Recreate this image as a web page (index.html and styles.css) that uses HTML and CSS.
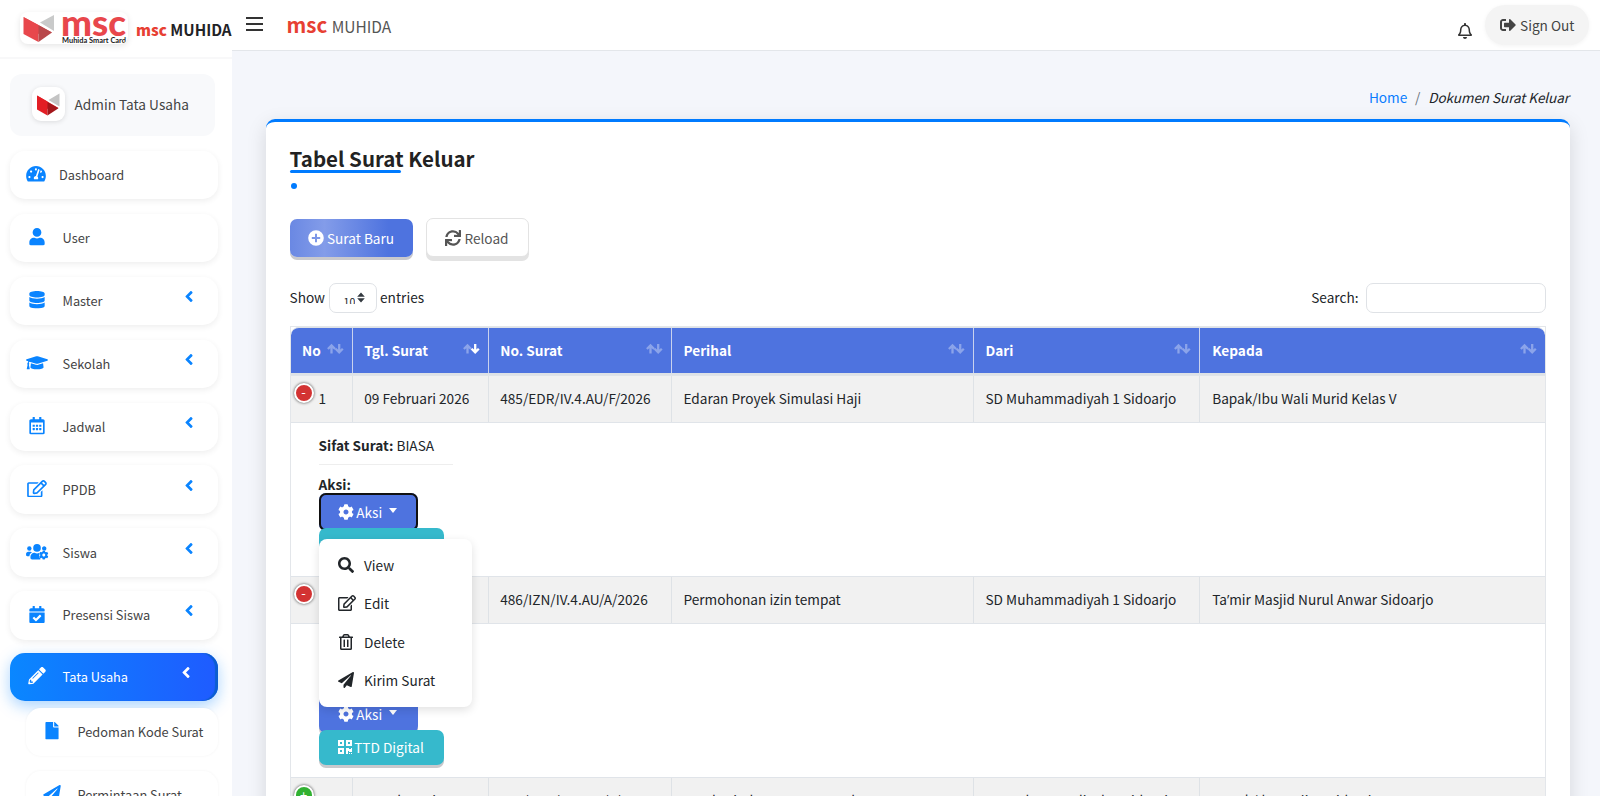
FILE: index.html
```html
<!DOCTYPE html>
<html lang="id">
<head>
<meta charset="utf-8">
<title>Dokumen Surat Keluar</title>
<link rel="stylesheet" href="styles.css">
</head>
<body>
<svg class="sprite" aria-hidden="true">
<symbol id="gauge" viewBox="0 0 576 512"><path d="M288 32C128.94 32 0 160.94 0 320c0 52.8 14.25 102.26 39.06 144.8 5.61 9.62 16.3 15.2 27.44 15.2h443c11.14 0 21.83-5.58 27.44-15.2C561.75 422.26 576 372.8 576 320c0-159.06-128.94-288-288-288zm0 64c14.71 0 26.58 10.13 30.32 23.65-1.11 2.26-2.64 4.23-3.45 6.67l-9.22 27.67c-5.13 3.49-10.97 6.01-17.64 6.01-17.67 0-32-14.33-32-32S270.33 96 288 96zM96 384c-17.67 0-32-14.33-32-32s14.33-32 32-32 32 14.33 32 32-14.33 32-32 32zm48-160c-17.67 0-32-14.33-32-32s14.33-32 32-32 32 14.33 32 32-14.33 32-32 32zm246.77-72.41l-61.33 184C343.13 347.33 352 364.54 352 384c0 11.72-3.38 22.55-8.88 32H232.88c-5.5-9.45-8.88-20.28-8.88-32 0-33.94 26.5-61.43 59.9-63.59l61.34-184.01c4.17-12.56 17.73-19.45 30.36-15.17 12.57 4.19 19.35 17.79 15.17 30.36zm14.66 57.2l15.52-46.55c3.47-1.29 7.13-2.23 11.05-2.23 17.67 0 32 14.33 32 32s-14.33 32-32 32c-11.38-.01-20.89-6.28-26.57-15.22zM480 384c-17.67 0-32-14.33-32-32s14.33-32 32-32 32 14.33 32 32-14.33 32-32 32z"/></symbol>
<symbol id="user" viewBox="0 0 448 512"><path d="M224 256c70.7 0 128-57.3 128-128S294.700 0 224 0 96 57.3 96 128s57.3 128 128 128zm89.6 32h-16.7c-22.2 10.2-46.9 16-72.9 16s-50.6-5.8-72.9-16h-16.7C60.2 288 0 348.2 0 422.4V464c0 26.5 21.5 48 48 48h352c26.5 0 48-21.5 48-48v-41.6c0-74.2-60.2-134.4-134.4-134.4z"/></symbol>
<symbol id="database" viewBox="0 0 448 512"><path d="M448 73.143v45.714C448 159.143 347.667 192 224 192S0 159.143 0 118.857V73.143C0 32.857 100.333 0 224 0s224 32.857 224 73.143zM448 176v102.857C448 319.143 347.667 352 224 352S0 319.143 0 278.857V176c48.125 33.143 136.208 48.572 224 48.572S399.874 209.143 448 176zm0 160v102.857C448 479.143 347.667 512 224 512S0 479.143 0 438.857V336c48.125 33.143 136.208 48.572 224 48.572S399.874 369.143 448 336z"/></symbol>
<symbol id="cap" viewBox="0 0 640 512"><path d="M622.34 153.2L343.4 67.5c-15.2-4.67-31.6-4.67-46.79 0L17.66 153.2c-23.54 7.23-23.54 38.36 0 45.59l48.63 14.94c-10.67 13.19-17.23 29.28-17.88 46.9C38.78 266.15 32 276.11 32 288c0 10.78 5.68 19.85 13.86 25.65L20.33 428.53C18.11 438.52 25.71 448 35.94 448h56.11c10.24 0 17.84-9.48 15.62-19.47L82.14 313.65C90.32 307.85 96 298.78 96 288c0-11.57-6.47-21.25-15.66-26.87.76-15.02 8.44-28.3 20.69-36.72L296.6 284.5c9.06 2.78 26.44 6.25 46.79 0l278.95-85.7c23.55-7.24 23.55-38.36 0-45.6zM352.79 315.09c-28.53 8.76-52.84 3.92-65.59 0l-145.02-44.55L128 384c0 35.35 85.96 64 192 64s192-28.65 192-64l-14.18-113.47-145.03 44.56z"/></symbol>
<symbol id="calendar" viewBox="0 0 448 512"><path d="M148 288h-40c-6.6 0-12-5.4-12-12v-40c0-6.6 5.4-12 12-12h40c6.6 0 12 5.4 12 12v40c0 6.6-5.4 12-12 12zm108-12v-40c0-6.6-5.4-12-12-12h-40c-6.6 0-12 5.4-12 12v40c0 6.6 5.4 12 12 12h40c6.6 0 12-5.4 12-12zm96 0v-40c0-6.6-5.4-12-12-12h-40c-6.6 0-12 5.4-12 12v40c0 6.6 5.4 12 12 12h40c6.6 0 12-5.4 12-12zm-96 96v-40c0-6.6-5.4-12-12-12h-40c-6.6 0-12 5.4-12 12v40c0 6.6 5.4 12 12 12h40c6.6 0 12-5.4 12-12zm-96 0v-40c0-6.6-5.4-12-12-12h-40c-6.6 0-12 5.4-12 12v40c0 6.6 5.4 12 12 12h40c6.6 0 12-5.4 12-12zm192 0v-40c0-6.6-5.4-12-12-12h-40c-6.6 0-12 5.4-12 12v40c0 6.6 5.4 12 12 12h40c6.6 0 12-5.4 12-12zm96-260v352c0 26.5-21.5 48-48 48H48c-26.5 0-48-21.5-48-48V112c0-26.5 21.5-48 48-48h48V12c0-6.6 5.4-12 12-12h40c6.6 0 12 5.4 12 12v52h128V12c0-6.6 5.4-12 12-12h40c6.6 0 12 5.4 12 12v52h48c26.5 0 48 21.5 48 48zm-48 346V160H48v298c0 3.3 2.7 6 6 6h340c3.3 0 6-2.7 6-6z"/></symbol>
<symbol id="edit" viewBox="0 0 576 512"><path d="M402.3 344.9l32-32c5-5 13.7-1.5 13.7 5.7V464c0 26.5-21.5 48-48 48H48c-26.5 0-48-21.5-48-48V112c0-26.5 21.5-48 48-48h273.5c7.1 0 10.7 8.6 5.7 13.7l-32 32c-1.5 1.5-3.5 2.3-5.7 2.3H48v352h352V350.5c0-2.1.8-4.1 2.3-5.6zm156.6-201.8L296.3 405.7l-90.4 10c-26.2 2.9-48.5-19.2-45.6-45.6l10-90.4L432.9 17.1c22.9-22.9 59.9-22.9 82.7 0l43.2 43.2c22.9 22.9 22.9 60 .1 82.8zM460.1 174L402 115.9 216.2 301.8l-7.3 65.3 65.3-7.3L460.1 174zm64.8-79.7l-43.2-43.2c-4.1-4.1-10.8-4.1-14.8 0L436 82l58.1 58.1 30.9-30.9c4-4.2 4-10.8-.1-14.9z"/></symbol>
<symbol id="cog" viewBox="0 0 512 512"><path d="M487.4 315.7l-42.6-24.6c4.3-23.2 4.3-47 0-70.2l42.6-24.6c4.9-2.8 7.1-8.6 5.5-14-11.1-35.6-30-67.8-54.7-94.6-3.8-4.1-10-5.1-14.8-2.3L380.8 110c-17.9-15.4-38.5-27.3-60.8-35.1V25.8c0-5.6-3.9-10.5-9.4-11.7-36.7-8.2-74.3-7.8-109.2 0-5.5 1.2-9.4 6.1-9.4 11.7V75c-22.2 7.9-42.8 19.8-60.8 35.1L88.7 85.5c-4.9-2.8-11-1.9-14.8 2.3-24.7 26.7-43.6 58.9-54.7 94.6-1.7 5.4.6 11.2 5.5 14L67.3 221c-4.3 23.2-4.3 47 0 70.2l-42.6 24.6c-4.9 2.8-7.1 8.6-5.5 14 11.1 35.6 30 67.8 54.7 94.6 3.8 4.1 10 5.1 14.8 2.3l42.6-24.6c17.9 15.4 38.5 27.3 60.8 35.1v49.2c0 5.6 3.9 10.5 9.4 11.7 36.7 8.2 74.3 7.8 109.2 0 5.5-1.2 9.4-6.1 9.4-11.7v-49.2c22.2-7.9 42.8-19.8 60.8-35.1l42.6 24.6c4.9 2.8 11 1.9 14.8-2.3 24.7-26.7 43.6-58.9 54.7-94.6 1.5-5.5-.7-11.3-5.6-14.1zM256 336c-44.1 0-80-35.9-80-80s35.9-80 80-80 80 35.9 80 80-35.9 80-80 80z"/></symbol>
<symbol id="userscog" viewBox="0 0 640 512"><circle cx="96" cy="160" r="64"/><circle cx="320" cy="144" r="112"/><path d="M0 352v-32c0-35 29-64 64-64h64c17 0 33 7 45 18-40 22-69 62-75 110H32c-18 0-32-14-32-32zM128 432v-29c0-64 52-115 115-115h8c45 21 95 21 138 0-8 20-8 40 6 58-20 30-14 75 22 98v36H176c-27 0-48-21-48-48zM467 160c0-35 29-64 64-64s64 29 64 64-20 56-50 63l-50-12c-17-11-28-29-28-51z"/><svg x="378" y="208" width="280" height="290" viewBox="0 0 512 512"><use href="#cog"/></svg></symbol>
<symbol id="calcheck" viewBox="0 0 448 512"><path d="M436 160H12c-6.627 0-12-5.373-12-12v-36c0-26.51 21.49-48 48-48h48V12c0-6.627 5.373-12 12-12h40c6.627 0 12 5.373 12 12v52h128V12c0-6.627 5.373-12 12-12h40c6.627 0 12 5.373 12 12v52h48c26.51 0 48 21.49 48 48v36c0 6.627-5.373 12-12 12zM12 192h424c6.627 0 12 5.373 12 12v260c0 26.51-21.49 48-48 48H48c-26.51 0-48-21.49-48-48V204c0-6.627 5.373-12 12-12zm333.296 95.947l-28.169-28.398c-4.667-4.705-12.265-4.736-16.97-.068L194.12 364.665l-45.98-46.352c-4.667-4.705-12.266-4.736-16.971-.068l-28.397 28.17c-4.705 4.667-4.736 12.265-.068 16.97l82.601 83.269c4.667 4.705 12.265 4.736 16.97.068l142.953-141.805c4.705-4.667 4.736-12.265.068-16.97z"/></symbol>
<symbol id="pencil" viewBox="0 0 512 512"><path d="M497.9 142.1l-46.1 46.1c-4.7 4.7-12.3 4.7-17 0l-111-111c-4.7-4.7-4.7-12.3 0-17l46.1-46.1c18.7-18.7 49.1-18.7 67.9 0l60.1 60.1c18.8 18.7 18.8 49.1 0 67.9zM284.2 99.8L21.6 362.4.4 483.9c-2.9 16.4 11.4 30.6 27.8 27.8l121.5-21.3 262.6-262.6c4.7-4.7 4.7-12.3 0-17l-111-111c-4.8-4.7-12.4-4.7-17.1 0zM124.1 339.9c-5.5-5.5-5.5-14.3 0-19.8l154-154c5.5-5.5 14.3-5.5 19.8 0s5.5 14.3 0 19.8l-154 154c-5.5 5.5-14.3 5.5-19.8 0zM88 424h48v36.3l-64.5 11.3-31.1-31.1L51.7 376H88v48z"/></symbol>
<symbol id="file" viewBox="0 0 384 512"><path d="M224 136V0H24C10.7 0 0 10.7 0 24v464c0 13.3 10.7 24 24 24h336c13.3 0 24-10.7 24-24V160H248c-13.2 0-24-10.8-24-24zm160-14.1v6.1H256V0h6.1c6.4 0 12.5 2.5 17 7l97.9 98c4.5 4.5 7 10.6 7 16.9z"/></symbol>
<symbol id="plane" viewBox="0 0 512 512"><path d="M476 3.2L12.5 270.6c-18.1 10.4-15.8 35.6 2.2 43.2L121 358.4l287.3-253.2c5.5-4.9 13.3 2.6 8.6 8.3L176 407v80.5c0 23.6 28.5 32.9 42.5 15.8L282 426l124.6 52.2c14.2 6 30.4-2.9 33-18.2l72-432C515 7.8 493.3-6.8 476 3.2z"/></symbol>
<symbol id="angle" viewBox="24 96 208 320"><path d="M31.7 239l136-136c9.4-9.4 24.6-9.4 33.9 0l22.6 22.6c9.4 9.4 9.4 24.6 0 33.9L127.9 256l96.4 96.4c9.4 9.4 9.4 24.6 0 33.9L201.7 409c-9.4 9.4-24.6 9.4-33.9 0l-136-136c-9.5-9.4-9.5-24.6-.1-34z"/></symbol>
<symbol id="bell" viewBox="0 0 448 512"><path d="M439.39 362.29c-19.32-20.76-55.47-51.99-55.47-154.29 0-77.7-54.48-139.9-127.94-155.16V32c0-17.67-14.32-32-31.98-32s-31.98 14.33-31.98 32v20.84C118.56 68.1 64.08 130.3 64.08 208c0 102.3-36.15 133.53-55.47 154.29-6 6.45-8.66 14.16-8.61 21.71.11 16.4 12.98 32 32.1 32h383.8c19.12 0 32-15.6 32.1-32 .05-7.55-2.61-15.27-8.61-21.71zM67.53 368c21.22-27.97 44.42-74.33 44.53-159.42 0-.2-.06-.38-.06-.58 0-61.86 50.14-112 112-112s112 50.14 112 112c0 .2-.06.38-.06.58.11 85.1 23.31 131.46 44.53 159.42H67.53zM224 512c35.32 0 63.97-28.65 63.97-64H160.03c0 35.35 28.65 64 63.97 64z"/></symbol>
<symbol id="signout" viewBox="0 0 512 512"><path d="M497 273L329 441c-15 15-41 4.500-41-17v-96H152c-13.3 0-24-10.700-24-24v-96c0-13.3 10.700-24 24-24h136V88c0-21.4 25.9-32 41-17l168 168c9.3 9.4 9.3 24.6 0 34zM192 436v-40c0-6.6-5.4-12-12-12H96c-17.7 0-32-14.3-32-32V160c0-17.7 14.3-32 32-32h84c6.6 0 12-5.4 12-12V76c0-6.6-5.4-12-12-12H96c-53 0-96 43-96 96v192c0 53 43 96 96 96h84c6.6 0 12-5.4 12-12z"/></symbol>
<symbol id="plus" viewBox="0 0 16 16"><path fill-rule="evenodd" d="M8 .2a7.800 7.800 0 1 0 0 15.6A7.800 7.800 0 0 0 8 .2zM7 3.800h2V7h3.200v2H9v3.200H7V9H3.800V7H7z"/></symbol>
<symbol id="sync" viewBox="0 0 512 512"><path d="M440.65 12.57l4 82.77A247.16 247.16 0 0 0 255.83 8C134.73 8 33.91 94.92 12.29 209.82A12 12 0 0 0 24.09 224h49.05a12 12 0 0 0 11.67-9.26 175.91 175.91 0 0 1 317-56.94l-101.46-4.86a12 12 0 0 0-12.57 12v47.41a12 12 0 0 0 12 12H500a12 12 0 0 0 12-12V12a12 12 0 0 0-12-12h-47.37a12 12 0 0 0-11.98 12.57zM255.83 432a175.61 175.61 0 0 1-146-77.8l101.8 4.87a12 12 0 0 0 12.57-12v-47.4a12 12 0 0 0-12-12H12a12 12 0 0 0-12 12V500a12 12 0 0 0 12 12h47.35a12 12 0 0 0 12-12.6l-4.15-82.57A247.17 247.17 0 0 0 255.83 504c121.11 0 221.93-86.92 243.55-201.82a12 12 0 0 0-11.8-14.18h-49.05a12 12 0 0 0-11.67 9.26A175.86 175.86 0 0 1 255.83 432z"/></symbol>
<symbol id="search" viewBox="0 0 512 512"><path d="M505 442.7L405.3 343c-4.5-4.5-10.6-7-17-7H372c27.6-35.3 44-79.7 44-128C416 93.1 322.9 0 208 0S0 93.1 0 208s93.1 208 208 208c48.3 0 92.7-16.4 128-44v16.3c0 6.4 2.5 12.5 7 17l99.7 99.7c9.4 9.4 24.6 9.4 33.9 0l28.3-28.3c9.4-9.4 9.4-24.6.1-34zM208 336c-70.7 0-128-57.2-128-128 0-70.7 57.2-128 128-128 70.7 0 128 57.2 128 128 0 70.7-57.2 128-128 128z"/></symbol>
<symbol id="trash" viewBox="0 0 448 512"><path d="M268 416h24a12 12 0 0 0 12-12V188a12 12 0 0 0-12-12h-24a12 12 0 0 0-12 12v216a12 12 0 0 0 12 12zM432 80h-82.41l-34-56.7A48 48 0 0 0 274.41 0H173.59a48 48 0 0 0-41.16 23.3L98.41 80H16A16 16 0 0 0 0 96v16a16 16 0 0 0 16 16h16v336a48 48 0 0 0 48 48h288a48 48 0 0 0 48-48V128h16a16 16 0 0 0 16-16V96a16 16 0 0 0-16-16zM171.84 50.91A6 6 0 0 1 177 48h94a6 6 0 0 1 5.15 2.91L293.61 80H154.39zM368 464H80V128h288zm-212-48h24a12 12 0 0 0 12-12V188a12 12 0 0 0-12-12h-24a12 12 0 0 0-12 12v216a12 12 0 0 0 12 12z"/></symbol>
<symbol id="qr" viewBox="0 0 448 512"><path d="M0 224h192V32H0v192zM64 96h64v64H64V96zm192-64v192h192V32H256zm128 128h-64V96h64v64zM0 480h192V288H0v192zm64-128h64v64H64v-64zm352-64h32v128h-96v-32h-32v96h-64V288h96v32h64v-32zm0 160h32v32h-32v-32zm-64 0h32v32h-32v-32z"/></symbol>
<symbol id="sort" viewBox="0 0 17 12"><g fill="none" stroke="#fff" stroke-width="2.3"><path class="up" d="M4.500 10.500V2.500M.9 6L4.500 2.400l3.600 3.600"/><path class="down" d="M12.200 1v8M8.600 5.700l3.600 3.600 3.600-3.600"/></g></symbol>
</svg>

<div class="app">
  <aside class="sidebar">
    <div class="brand">
      <svg class="brand-logo" width="108" height="32" viewBox="0 0 108 32">
        <path fill="#e8474c" d="M3.500 5L18.500 13V30L3.500 22z"/><path fill="#e8474c" d="M3.500 5L32 20.500 18.500 22z"/><path fill="#b9484b" d="M18.500 13L32 20.500 18.500 30z"/><path fill="#c9caca" d="M34 3V19L20 10.500z"/>
        <text class="logo-word" x="41" y="23.600" textLength="65" lengthAdjust="spacingAndGlyphs">msc</text>
        <text class="logo-tag" x="42" y="30.500" textLength="64" lengthAdjust="spacingAndGlyphs">Muhida Smart Card</text>
      </svg>
      <span class="brand-text"><b class="red">msc</b> MUHIDA</span>
    </div>
    <div class="profile">
      <span class="avatar"><svg width="24" height="24" viewBox="0 0 24 24"><path fill="#e31e25" d="M1 3.500L11.500 9.500V23.500L1 17.500z"/><path fill="#e31e25" d="M1 3.500L22.500 16 11.500 17z"/><path fill="#a3161b" d="M11.500 10L22.500 16.200 11.500 23.500z"/><path fill="#c4c4c4" d="M23.500 1.500V14.500L12.500 8z"/></svg></span>
      <span class="profile-name">Admin Tata Usaha</span>
    </div>
    <nav class="menu">
      <a class="item dash"><svg class="ic"><use href="#gauge"/></svg><span>Dashboard</span></a>
      <a class="item"><svg class="ic"><use href="#user"/></svg><span>User</span></a>
      <a class="item"><svg class="ic"><use href="#database"/></svg><span>Master</span><svg class="arrow"><use href="#angle"/></svg></a>
      <a class="item"><svg class="ic"><use href="#cap"/></svg><span>Sekolah</span><svg class="arrow"><use href="#angle"/></svg></a>
      <a class="item"><svg class="ic"><use href="#calendar"/></svg><span>Jadwal</span><svg class="arrow"><use href="#angle"/></svg></a>
      <a class="item"><svg class="ic"><use href="#edit"/></svg><span>PPDB</span><svg class="arrow"><use href="#angle"/></svg></a>
      <a class="item"><svg class="ic"><use href="#userscog"/></svg><span>Siswa</span><svg class="arrow"><use href="#angle"/></svg></a>
      <a class="item"><svg class="ic"><use href="#calcheck"/></svg><span>Presensi Siswa</span><svg class="arrow"><use href="#angle"/></svg></a>
      <a class="item active"><svg class="ic"><use href="#pencil"/></svg><span>Tata Usaha</span><svg class="arrow"><use href="#angle"/></svg></a>
      <a class="item sub"><svg class="ic"><use href="#file"/></svg><span>Pedoman Kode Surat</span></a>
      <a class="item sub"><svg class="ic"><use href="#plane"/></svg><span>Permintaan Surat</span></a>
    </nav>
  </aside>

  <div class="page">
    <header class="topbar">
      <span class="bars"><i></i><i></i><i></i></span>
      <span class="title-brand"><b class="red">msc</b> MUHIDA</span>
      <svg class="bell"><use href="#bell"/></svg>
      <a class="signout"><svg width="16" height="16"><use href="#signout"/></svg>Sign Out</a>
    </header>
    <div class="crumbs"><a>Home</a><span class="slash">/</span><em>Dokumen Surat Keluar</em></div>

    <main class="card">
      <h1 class="card-title">Tabel Surat Keluar</h1>
      <div class="underline"></div>
      <div class="dot"></div>
      <div class="actions">
        <button class="btn primary shine"><svg width="16" height="16"><use href="#plus"/></svg>Surat Baru</button>
        <button class="btn light"><svg width="16" height="16"><use href="#sync"/></svg>Reload</button>
      </div>
      <div class="filters">
        <div class="length"><span class="lbl">Show</span><span class="select"><span class="num"><span>10</span></span><svg width="8" height="11" viewBox="0 0 8 11"><path fill="#343a40" d="M4 .5L7.800 4.700H.2zM4 10.500L.2 6.300h7.600z"/></svg></span><span class="lbl">entries</span></div>
        <div class="find"><span class="lbl">Search:</span><span class="input"></span></div>
      </div>

      <div class="table">
        <div class="row head">
          <div>No<svg class="sort"><use href="#sort"/></svg></div><div>Tgl. Surat<svg class="sort desc"><use href="#sort"/></svg></div><div>No. Surat<svg class="sort"><use href="#sort"/></svg></div><div>Perihal<svg class="sort"><use href="#sort"/></svg></div><div>Dari<svg class="sort"><use href="#sort"/></svg></div><div>Kepada<svg class="sort"><use href="#sort"/></svg></div>
        </div>
        <div class="row">
          <div class="first"><span class="toggle">-</span>1</div><div>09 Februari 2026</div><div>485/EDR/IV.4.AU/F/2026</div><div>Edaran Proyek Simulasi Haji</div><div>SD Muhammadiyah 1 Sidoarjo</div><div>Bapak/Ibu Wali Murid Kelas V</div>
        </div>
        <div class="child">
          <div class="sifat"><b>Sifat Surat:</b> BIASA</div>
          <div class="aksi-label"><b>Aksi:</b></div>
          <div class="stack">
            <button class="btn primary aksi focus"><svg width="16" height="16"><use href="#cog"/></svg>Aksi<i class="caret"></i></button>
            <button class="btn info"><svg width="14" height="16"><use href="#qr"/></svg>TTD Digital</button>
            <div class="dropdown">
              <a><svg width="16" height="16"><use href="#search"/></svg><span>View</span></a>
              <a><svg width="18" height="16"><use href="#edit"/></svg><span>Edit</span></a>
              <a><svg width="16" height="16"><use href="#trash"/></svg><span>Delete</span></a>
              <a><svg width="16" height="16"><use href="#plane"/></svg><span>Kirim Surat</span></a>
            </div>
          </div>
        </div>
        <div class="row">
          <div class="first"><span class="toggle">-</span></div><div></div><div>486/IZN/IV.4.AU/A/2026</div><div>Permohonan izin tempat</div><div>SD Muhammadiyah 1 Sidoarjo</div><div><span>Ta<span class="apos">’</span>mir Masjid Nurul Anwar Sidoarjo</span></div>
        </div>
        <div class="child second">
          <div class="stack">
            <button class="btn primary aksi"><svg width="16" height="16"><use href="#cog"/></svg>Aksi<i class="caret"></i></button>
            <button class="btn info"><svg width="14" height="16"><use href="#qr"/></svg>TTD Digital</button>
          </div>
        </div>
        <div class="row last">
          <div class="first"><span class="toggle open">+</span>3</div><div>10 Februari 2026</div><div>487/EDR/IV.4.AU/F/2026</div><div>Pemberitahuan Munaqosah</div><div>SD Muhammadiyah 1 Sidoarjo</div><div>Bapak/Ibu Wali Murid Kelas VI</div>
        </div>
      </div>
    </main>
  </div>
</div>
</body>
</html>
```
FILE: styles.css
```css
* { box-sizing: border-box; }
body {
  margin: 0; height: 796px; overflow: hidden; background: #f4f6fb;
  font-family: "Noto Sans CJK SC", "Noto Sans", sans-serif;
  font-size: 13.650px; line-height: 24px; color: #212529;
}
svg { fill: currentColor; flex: none; }
button { font: inherit; }
.sprite { position: absolute; width: 0; height: 0; }
.red { color: #e74033; }
.app { display: flex; height: 796px; overflow: hidden; }

/* Sidebar */
.sidebar { width: 232px; flex: none; background: #fff; height: 796px; overflow: hidden; }
.brand { height: 59px; border-bottom: 2px solid #f8f8f9; display: flex; align-items: center; padding-left: 20px; white-space: nowrap; }
.brand-logo { border-radius: 8px; box-shadow: 0 2px 6px rgba(0,0,0,.1); margin-top: -2px; }
.logo-word { font: 900 35.500px Lato, sans-serif; fill: #e8474c; }
.logo-tag { font: 700 7px Lato, sans-serif; fill: #222; }
.brand-text { font-size: 15.200px; font-weight: 700; margin: 0 0 0 8px; color: #1f2226; }
.profile { margin: 15px 17px 0 10px; height: 62px; border-radius: 12px; background: #f8f9fb; padding-left: 21.500px; display: flex; align-items: center; gap: 10px; color: #444; }
.profile-name { margin-top: -3px; }
.avatar { width: 33px; height: 34px; border-radius: 9px; background: #fff; box-shadow: 0 1px 5px rgba(0,0,0,.12); display: flex; align-items: center; justify-content: center; margin-top: -2px; }
.menu { padding: 15px 14px 0 10px; display: flex; flex-direction: column; gap: 14.500px; }
.item { height: 48.400px; flex: none; border-radius: 15px; background: #fff; box-shadow: 0 2px 6px rgba(0,0,0,.07); display: flex; align-items: center; padding-left: 15px; font-size: 12.800px; color: #444; white-space: nowrap; }
.item .ic { width: 24px; height: 17.500px; color: #0a84ff; margin-right: 13.500px; margin-top: -2px; }
.item.dash .ic { margin: -2px 11.500px 0 -1.500px; height: 17.500px; }
.item .arrow { width: 8px; height: 11px; color: #0a84ff; margin: -9px 25px 0 auto; }
.item.active { margin-top: -1.500px; color: #fff; background: linear-gradient(90deg, #0a87ff, #1f5bff); box-shadow: 0 5px 15px rgba(10,132,255,.35), inset -3px 0 1px #0b5ed0; }
.item.active .ic, .item.active .arrow { color: #fff; }
.item.active .arrow { margin-right: 28px; }
.item.sub { margin-left: 16px; padding-left: 14px; box-shadow: 0 0 3px rgba(0,0,0,.05); }
.item.active + .sub { margin-top: -7.500px; }

/* Top bar */
.page { flex: 1; min-width: 0; }
.topbar { height: 51px; background: #fff; border-bottom: 1px solid #e3e6ea; display: flex; align-items: center; padding: 0 11px 0 14px; }
.bars { width: 17px; display: flex; flex-direction: column; gap: 3.500px; margin-top: -2px; }
.bars i { height: 2.500px; background: #333; }
.title-brand { font-size: 15.500px; margin-left: 23.500px; margin-top: 0; color: #555; }
.title-brand b { font-size: 20.500px; margin-right: 1px; }
.bell { width: 14px; height: 16px; color: #333; margin: 12px 13px 0 auto; }
.signout { width: 104px; height: 40px; border-radius: 20px; background: #f4f4f4; box-shadow: 0 1px 4px rgba(0,0,0,.05); display: flex; align-items: center; padding-left: 15px; gap: 4px; color: #444; }
.crumbs { height: 68px; padding: 34px 31px 0 0; display: flex; justify-content: flex-end; }
.crumbs a { color: #0a7dff; }
.crumbs em { font-size: 13.500px; letter-spacing: -.05px; }
.slash { color: #6c757d; margin: 0 7.800px; }

/* Card */
.card { margin: 0 30.500px 0 33.500px; height: 800px; background: #fff; border-top: 3px solid #007bff; border-radius: 9px 9px 0 0; box-shadow: 0 6px 20px rgba(0,0,0,.13); padding: 20px 24px 0; }
.card-title { font-size: 20.500px; line-height: 32px; font-weight: 700; margin: 0; height: 28px; color: #222; }
.underline { width: 111px; height: 3px; border-radius: 2px; background: #007bff; }
.dot { width: 6px; height: 6px; border-radius: 50%; background: #007bff; margin: 10px 0 0 1px; }
.actions { display: flex; gap: 13px; margin-top: 29px; height: 43px; }
.btn { height: 38px; border: 0; border-radius: 7px; display: flex; align-items: center; justify-content: center; padding: 0; gap: 3px; color: #fff; white-space: nowrap; }
.primary { background: #4e73df; box-shadow: 0 3px 0 #c9c9cd; }
.shine { width: 123px; margin-top: 1px; background: linear-gradient(90deg, #6a88e3 0%, #839ce9 28%, #4e73df 80%); }
.light { width: 103px; height: 39px; color: #555; background: #fff; border: 1px solid #e3e3e3; box-shadow: 0 4px 0 #e3e3e3; }
.filters { margin-top: 21.500px; height: 30px; display: flex; justify-content: space-between; align-items: center; }
.length, .find { display: flex; align-items: center; gap: 3.500px; }
.find { gap: 7px; }
.lbl { margin-bottom: 2px; }
.select { width: 48px; height: 30px; border: 1px solid #dfe2e6; border-radius: 7px; display: flex; align-items: center; padding: 0 0 0 14px; gap: 2px; font-size: 10.500px; }
.num { height: 7px; overflow: hidden; margin-top: 5px; }
.num span { display: block; line-height: 16px; margin-top: -3px; }
.input { width: 180px; height: 30px; border: 1px solid #dfe2e6; border-radius: 7px; }

/* Table */
.table { margin-top: 13.500px; border: 1px solid #e3e6ea; height: 600px; }
.row { display: grid; grid-template-columns: 61px 136px 183.300px 302px 226.700px 1fr; height: 47.500px; background: #f1f1f1; border-top: 1px solid #e0e4e9; border-bottom: 1px solid #e0e4e9; white-space: nowrap; }
.row > div { padding: 0 0 1.500px 11.700px; display: flex; align-items: center; border-left: 1px solid #dee2e6; }
.row > div:first-child { border-left: 0; padding-left: 11.500px; }
.head { height: 48px; background: #4e73df; border-top: 1px solid #dee2e6; border-bottom: 2px solid #dee2e6; border-radius: 8px 8px 0 0; color: #fff; font-weight: 700; }
.head > div { padding-right: 8px; border-color: #c9d2ee; }
.sort { width: 17px; height: 12px; margin: -1px 0 0 auto; --up: .35; --down: .35; }
.sort.desc { --down: 1; }
.up { opacity: var(--up, .35); }
.down { opacity: var(--down, .35); }
.row > .first:first-child { padding-left: 3px; }
.toggle { width: 20px; height: 20px; flex: none; border-radius: 50%; border: 2px solid #fff; background: #d33333; box-shadow: 0 0 3px #444; color: #fff; font-size: 13px; line-height: 14px; text-align: center; margin: -11px 5px 0 0; }
.toggle.open { background: #31b131; line-height: 15px; }
.child { height: 153.500px; padding: 10px 0 0 28px; }
.sifat { width: 134px; height: 32px; border-bottom: 1px solid #eee; }
.aksi-label { margin-top: 7px; height: 21.500px; }
.stack { position: relative; width: 160px; }
.aksi { width: 99px; height: 38px; border-radius: 7px; padding-right: 1px; gap: 2.500px; }
.focus { box-shadow: inset 0 0 0 2px #111; }
.caret { border: 4.500px solid transparent; border-top: 5px solid #fff; border-bottom: 0; margin: -3px 0 0 4.500px; }
.info { width: 125px; height: 35px; margin-top: -3px; position: relative; background: #36b9cc; box-shadow: 0 3px 0 #c9c9cd; gap: 2px; }
.dropdown { position: absolute; z-index: 2; left: 0; top: 45.500px; width: 153px; height: 168px; padding: 8px 0 0 19px; background: #fff; border-radius: 8px; box-shadow: 0 3px 10px rgba(0,0,0,.12); }
.dropdown a { height: 38.300px; display: flex; align-items: center; }
.dropdown svg { margin-top: -1px; }
.dropdown span { margin: 0 0 1px 10.500px; }
.dropdown svg[width="18"] + span { margin-left: 8.500px; }
.second { padding-top: 71px; }
.apos { font-family: "Open Sans", sans-serif; }
```
